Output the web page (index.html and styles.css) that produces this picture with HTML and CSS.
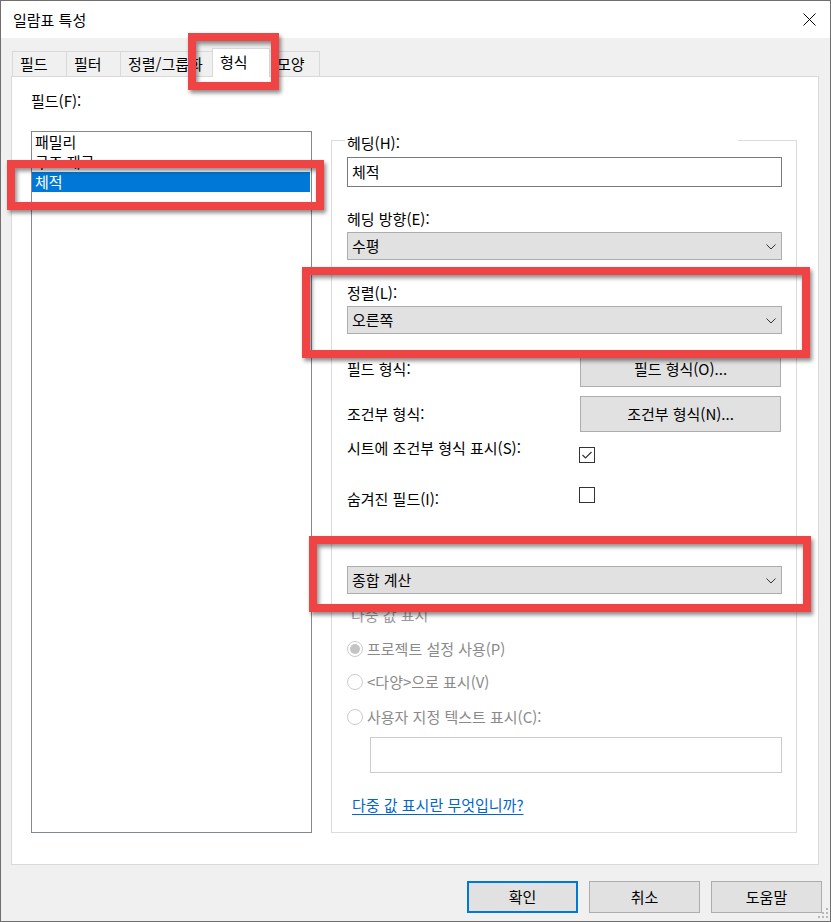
FILE: index.html
```html
<!DOCTYPE html>
<html lang="ko">
<head>
<meta charset="utf-8">
<title>일람표 특성</title>
<link rel="stylesheet" href="styles.css">
</head>
<body>
<div class="window">
  <div class="titlebar">
    <span class="title">일람표 특성</span>
    <svg class="close" width="13" height="13" viewBox="0 0 13 13"><path d="M0.5 0.5 L12.5 12.5 M12.5 0.5 L0.5 12.5" stroke="#000" stroke-width="1" fill="none"/></svg>
  </div>
  <div class="tabs">
    <div class="tab t1">필드</div>
    <div class="tab t2">필터</div>
    <div class="tab t3">정렬/그룹화</div>
    <div class="tab t4 active">형식</div>
    <div class="tab t5">모양</div>
  </div>
  <div class="panel">
    <div class="col-left">
      <div class="label">필드(F):</div>
      <div class="listbox">
        <div class="item">패밀리</div>
        <div class="item">구조 재료</div>
        <div class="item selected">체적</div>
      </div>
    </div>
    <div class="group">
      <div class="legend">헤딩(H):</div>
      <div class="textbox">체적</div>
      <div class="label gap22">헤딩 방향(E):</div>
      <div class="combo gap3"><span>수평</span><svg class="chev" width="10" height="6" viewBox="0 0 10 6"><path d="M0.5 0.5 L5 5 L9.5 0.5" stroke="#333" stroke-width="1" fill="none"/></svg></div>
      <div class="label gap23">정렬(L):</div>
      <div class="combo gap3"><span>오른쪽</span><svg class="chev" width="10" height="6" viewBox="0 0 10 6"><path d="M0.5 0.5 L5 5 L9.5 0.5" stroke="#333" stroke-width="1" fill="none"/></svg></div>
      <div class="btnrow gap17"><span class="rowlabel">필드 형식:</span><div class="button wide">필드 형식(O)...</div></div>
      <div class="btnrow gap9"><span class="rowlabel">조건부 형식:</span><div class="button wide">조건부 형식(N)...</div></div>
      <div class="checkrow first"><span class="rowlabel">시트에 조건부 형식 표시(S):</span><span class="checkbox"><svg width="14" height="14" viewBox="0 0 14 14"><path d="M2.5 7 L5.5 10 L11.5 4" stroke="#333" stroke-width="1.2" fill="none"/></svg></span></div>
      <div class="checkrow second"><span class="rowlabel">숨겨진 필드(I):</span><span class="checkbox"></span></div>
      <div class="combo gap63"><span>종합 계산</span><svg class="chev" width="10" height="6" viewBox="0 0 10 6"><path d="M0.5 0.5 L5 5 L9.5 0.5" stroke="#333" stroke-width="1" fill="none"/></svg></div>
      <div class="label disabled sub">다중 값 표시</div>
      <div class="radiorow r1"><span class="radio checked"></span><span class="disabled">프로젝트 설정 사용(P)</span></div>
      <div class="radiorow r2"><span class="radio"></span><span class="disabled">&lt;다양&gt;으로 표시(V)</span></div>
      <div class="radiorow r3"><span class="radio"></span><span class="disabled">사용자 지정 텍스트 표시(C):</span></div>
      <div class="textbox disabledbox"></div>
      <div class="link">다중 값 표시란 무엇입니까?</div>
    </div>
  </div>
  <div class="footer">
    <div class="button default">확인</div>
    <div class="button">취소</div>
    <div class="button">도움말</div>
  </div>
  <div class="annot a1"></div>
  <div class="annot a2"></div>
  <div class="annot a3"></div>
  <div class="annot a4"></div>
  <svg class="grip" width="11" height="11" viewBox="0 0 11 11">
    <rect x="8" y="0" width="2" height="2" fill="#b8b8b8"/>
    <rect x="4" y="4" width="2" height="2" fill="#b8b8b8"/>
    <rect x="8" y="4" width="2" height="2" fill="#b8b8b8"/>
    <rect x="0" y="8" width="2" height="2" fill="#b8b8b8"/>
    <rect x="4" y="8" width="2" height="2" fill="#b8b8b8"/>
    <rect x="8" y="8" width="2" height="2" fill="#b8b8b8"/>
  </svg>
</div>
</body>
</html>
```
FILE: styles.css
```css
* { box-sizing: border-box; }
html, body { margin: 0; padding: 0; background: #f0f0f0; }
body {
  font-family: "Noto Sans CJK KR", "Noto Sans", sans-serif;
  font-size: 15px;
  line-height: 20px;
  color: #000;
}
.window {
  position: relative;
  width: 831px;
  height: 922px;
  border: 1px solid #6f6f6f;
  background: #f0f0f0;
  display: flex;
  flex-direction: column;
}
.titlebar {
  height: 37px;
  background: #fff;
  display: flex;
  align-items: center;
  justify-content: space-between;
  padding: 0 14px 0 12px;
}
.title { font-size: 15px; }
.close { display: block; }

.tabs {
  display: flex;
  align-items: flex-end;
  height: 28px;
  margin: 10px 0 0 11px;
}
.tab {
  height: 25px;
  border: 1px solid #d9d9d9;
  border-bottom: none;
  background: #f0f0f0;
  padding: 1px 0 0 7px;
  line-height: 22px;
  margin-left: -1px;
}
.t1 { width: 55px; margin-left: 0; }
.t2 { width: 55px; }
.t3 { width: 93px; }
.t4 { width: 58px; }
.t5 { width: 51px; }
.tab.active {
  height: 29px;
  background: #fff;
  margin-bottom: -1px;
  position: relative;
  z-index: 1;
  padding-top: 2px;
}

.panel {
  margin-left: 10px;
  width: 808px;
  height: 789px;
  border: 1px solid #d9d9d9;
  background: #fff;
  display: grid;
  grid-template-columns: 281px 466px;
  column-gap: 19px;
  padding: 14px 21px 31px 19px;
}
.col-left { display: flex; flex-direction: column; }
.label { height: 20px; white-space: nowrap; }
.listbox {
  margin-top: 20px;
  flex: 1;
  border: 1px solid #828790;
  background: #fff;
  padding-right: 1px;
}
.item { height: 20px; padding-left: 3px; line-height: 20px; }
.item.selected { background: #0078d7; color: #fff; }

.group {
  margin-top: 49px;
  border: 1px solid #dcdcdc;
  padding: 0 14px 0 15px;
  display: flex;
  flex-direction: column;
}
.legend {
  margin: -8px 0 0 -2px;
  padding-left: 2px;
  width: 393px;
  height: 20px;
  background: #fff;
}
.textbox {
  margin-top: 4px;
  height: 30px;
  border: 1px solid #7a7a7a;
  background: #fff;
  padding: 4px 0 0 4px;
}
.gap3 { margin-top: 3px; }
.gap9 { margin-top: 9px; }
.gap17 { margin-top: 17px; }
.gap22 { margin-top: 22px; }
.gap23 { margin-top: 23px; }
.gap63 { margin-top: 63px; }
.combo {
  height: 28px;
  border: 1px solid #adadad;
  background: #e1e1e1;
  display: flex;
  align-items: center;
  justify-content: space-between;
  padding: 0 5px 0 4px;
}
.chev { display: block; margin-top: 1px; }

.btnrow {
  height: 36px;
  display: flex;
  align-items: center;
}
.rowlabel { width: 233px; white-space: nowrap; }
.button {
  height: 32px;
  width: 111px;
  border: 1px solid #adadad;
  background: #e1e1e1;
  display: flex;
  align-items: center;
  justify-content: center;
}
.button.wide { width: 201px; height: 36px; }
.button.default { border: 2px solid #0078d7; }

.checkrow { display: flex; align-items: flex-start; }
.checkrow.first { margin-top: 6px; height: 25px; }
.checkrow.first .checkbox { margin-top: 9px; }
.checkrow.second { margin-top: 24px; height: 16px; }
.checkrow.second .rowlabel { margin-top: 2px; }
.checkbox {
  width: 16px;
  height: 16px;
  margin-left: -1px;
  border: 1px solid #333;
  background: #fff;
  display: flex;
  align-items: center;
  justify-content: center;
}
.checkbox svg { display: block; }

.disabled { color: #8a8a8a; }
.label.sub { margin-top: 11px; padding-left: 4px; color: #9a9a9a; }
.radiorow { display: flex; align-items: center; height: 20px; }
.r1 { margin-top: 14px; }
.r2 { margin-top: 13px; }
.r3 { margin-top: 15px; }
.radio {
  width: 16px;
  height: 16px;
  border-radius: 50%;
  border: 1px solid #cccccc;
  background: #fff;
  margin-right: 4px;
  display: flex;
  align-items: center;
  justify-content: center;
}
.radio.checked::after {
  content: "";
  width: 10px;
  height: 10px;
  border-radius: 50%;
  background: #c4c4c4;
}
.disabledbox {
  margin: 10px 0 0 23px;
  height: 36px;
  border-color: #cccccc;
}
.link {
  margin: 22px 0 0 5px;
  color: #0066cc;
  text-decoration: underline;
  text-underline-offset: 3px;
  white-space: nowrap;
}

.footer {
  display: flex;
  justify-content: flex-end;
  gap: 11px;
  margin-top: 16px;
  padding-right: 8px;
}

.annot {
  position: absolute;
  border: 8px solid #f04444;
  box-shadow: 2px 3px 4px rgba(0,0,0,0.45), inset 2px 3px 4px rgba(0,0,0,0.45);
  z-index: 5;
}
.a1 { left: 187px; top: 32px; width: 91px; height: 57px; }
.a2 { left: 6px; top: 159px; width: 317px; height: 50px; }
.a3 { left: 301px; top: 266px; width: 508px; height: 91px; }
.a4 { left: 308px; top: 535px; width: 502px; height: 76px; }

.grip { position: absolute; right: 1px; bottom: 2px; }
```
